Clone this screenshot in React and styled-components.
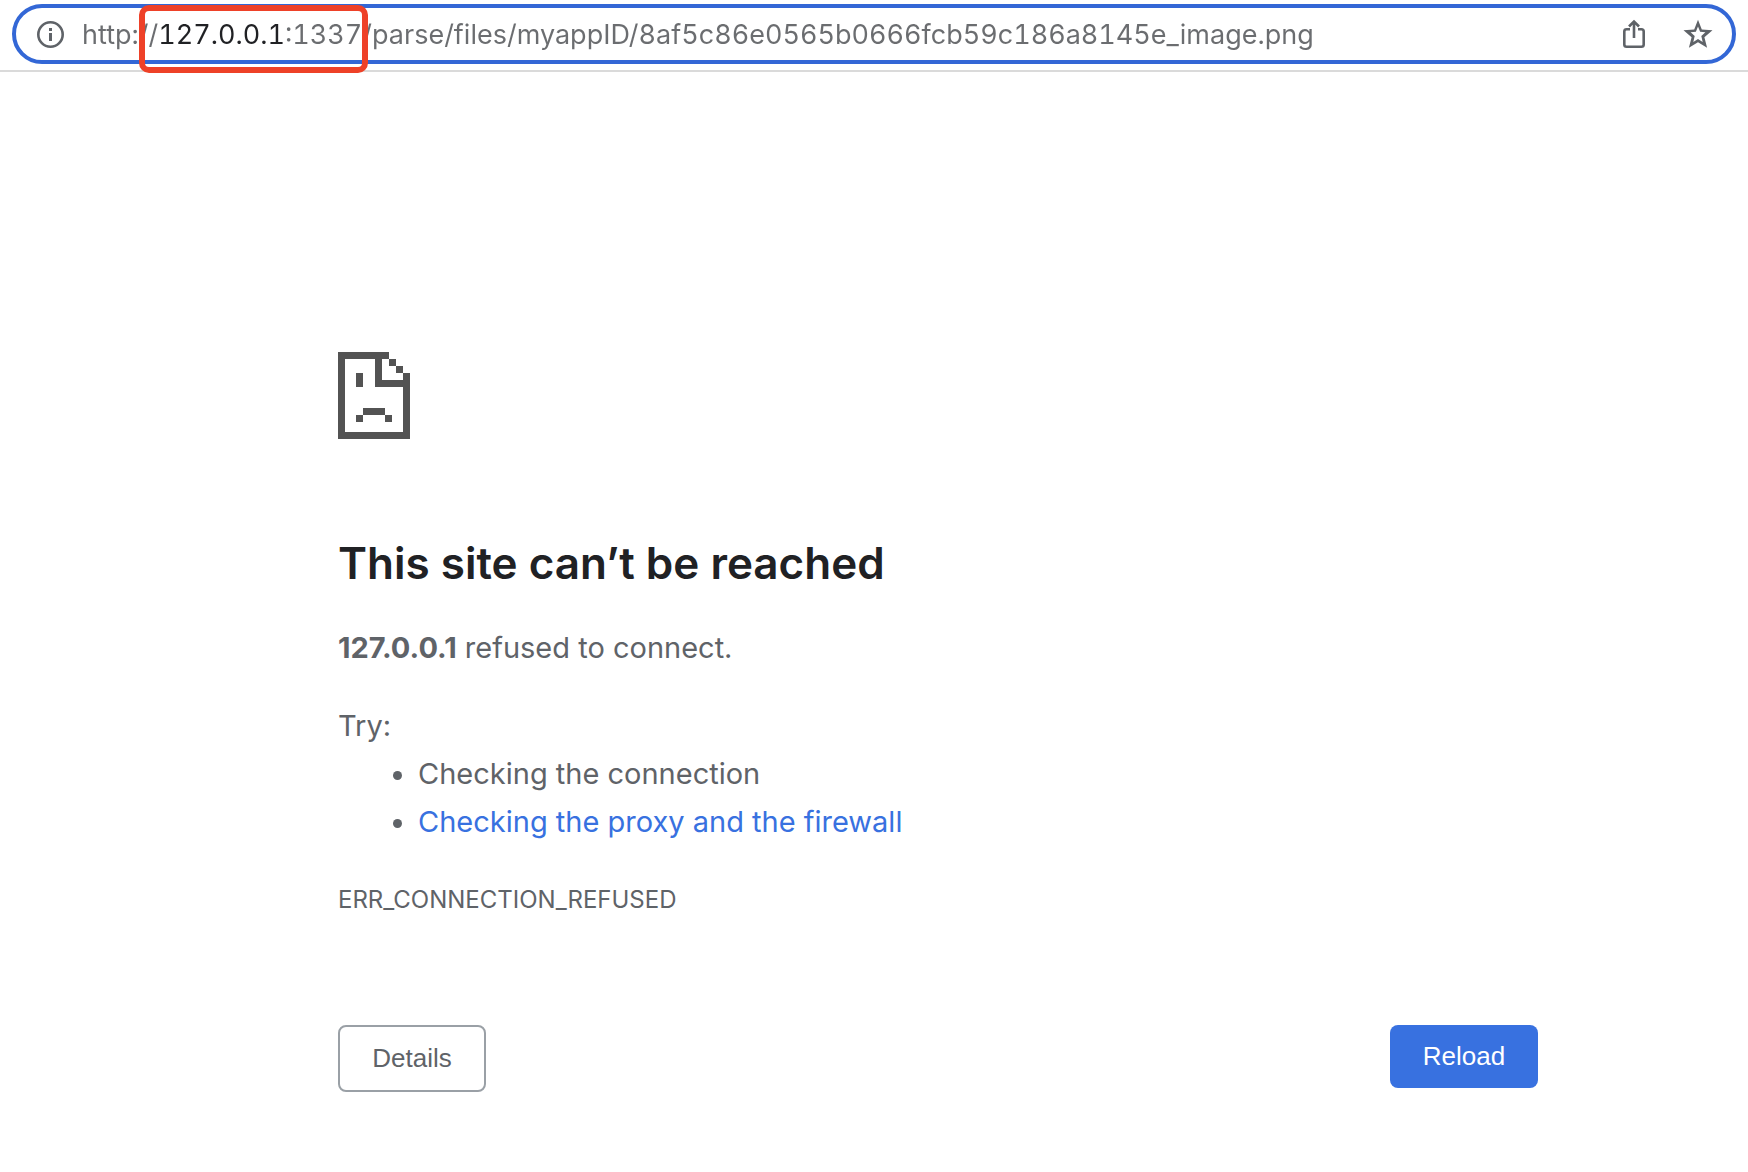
import React from "react";
import styled, { createGlobalStyle } from "styled-components";

const GlobalStyle = createGlobalStyle`
  *, *::before, *::after { box-sizing: border-box; }
  body {
    margin: 0;
    background: #fff;
    color: #5f6368;
    font-family: Inter, "Liberation Sans", sans-serif;
    font-size: 29px;
    line-height: 48px;
  }
`;

const Toolbar = styled.header`
  padding: 4px 12px 6px;
  border-bottom: 2px solid #dadada;
`;

const Omnibox = styled.form`
  position: relative;
  display: flex;
  align-items: center;
  height: 60px;
  padding: 0 19px 0 20px;
  border: 4px solid #3367d6;
  border-radius: 30px;
`;

const IconButton = styled.button`
  display: flex;
  flex: none;
  padding: 0;
  margin-left: ${(p) => p.$gap || 0}px;
  border: 0;
  background: none;
  color: #5f6368;
  cursor: pointer;
`;

/* The gradient paints the host part of the address darker than the rest. */
const Address = styled.input`
  flex: 1;
  min-width: 0;
  height: 50px;
  margin-left: 18px;
  padding: 0;
  border: 0;
  outline: 0;
  font: inherit;
  font-size: 27px;
  font-variant-numeric: tabular-nums;
  color: transparent;
  caret-color: #202124;
  background: linear-gradient(90deg, #6b6d70 76px, #202124 76px, #202124 203px, #6b6d70 203px);
  -webkit-background-clip: text;
  background-clip: text;
`;

const Highlight = styled.span`
  position: absolute;
  top: -3px;
  left: 123px;
  width: 229px;
  height: 68px;
  border: 6px solid #ee4128;
  border-radius: 10px;
  pointer-events: none;
`;

const ErrorPage = styled.main`
  max-width: 1200px;
  margin: 280px 210px 0 338px;
`;

const SadFile = styled.svg`
  display: block;
  width: 72px;
  height: 87px;
  fill: #535353;
`;

const Title = styled.h1`
  margin: 94px 0 31px;
  color: #202124;
  font-size: 44px;
  font-weight: 600;
  line-height: 60px;
`;

const Text = styled.p`
  margin: 0 0 ${(p) => p.$after || 0}px;
`;

const Tips = styled.ul`
  margin: 0 0 30px;
  padding-left: 80px;
`;

const Link = styled.a`
  color: #3871e0;
  text-decoration: none;
`;

const ErrorCode = styled.p`
  margin: 0;
  font-size: 24px;
`;

const Actions = styled.div`
  display: flex;
  align-items: flex-start;
  justify-content: space-between;
  margin-top: 101px;
`;

const Button = styled.button`
  min-width: 148px;
  height: ${(p) => (p.$primary ? 63 : 67)}px;
  padding: 0 32px;
  border: ${(p) => (p.$primary ? "0" : "2px solid #9aa0a6")};
  border-radius: 8px;
  background: ${(p) => (p.$primary ? "#3871e0" : "#fff")};
  color: ${(p) => (p.$primary ? "#fff" : "#5f6368")};
  font-family: "Liberation Sans", Arial, sans-serif;
  font-size: 26px;
  cursor: pointer;
`;

const InfoIcon = () => (
  <svg width="28" height="28" viewBox="0 0 28 28" aria-hidden="true">
    <circle cx="14.5" cy="14.5" r="12.2" fill="none" stroke="currentColor" strokeWidth="2.6" />
    <path d="M13 8h3v3h-3zM13 13h3v8h-3z" fill="currentColor" />
  </svg>
);

const ShareIcon = () => (
  <svg width="24" height="30" viewBox="0 0 24 30" fill="none" stroke="currentColor" strokeWidth="2.6" aria-hidden="true">
    <path d="M8 10.2H4.6Q2.3 10.2 2.3 12.5V25.5Q2.3 27.7 4.6 27.7H19.4Q21.7 27.7 21.7 25.5V12.5Q21.7 10.2 19.4 10.2H16" />
    <path d="M12 19V2.5M7 7.5L12 2.5L17 7.5" />
  </svg>
);

const StarIcon = () => (
  <svg width="30" height="30" viewBox="0 0 30 30" aria-hidden="true">
    <path
      fill="currentColor"
      fillRule="evenodd"
      d="M15 .8L18.8 10.6L29.5 11.3L21.4 18.2L24.1 28.8L15 23.2L5.9 28.8L8.6 18.2L.5 11.3L11.2 10.6ZM15 7.4L12.9 12.8L7.6 13.3L11.7 17L10.3 22.9L15 19.9L19.7 22.9L18.3 17L22.4 13.3L17.1 12.8Z"
    />
  </svg>
);

export default function App() {
  return (
    <>
      <GlobalStyle />
      <Toolbar>
        <Omnibox onSubmit={(e) => e.preventDefault()}>
          <IconButton type="button" aria-label="View site information">
            <InfoIcon />
          </IconButton>
          <Address
            type="text"
            aria-label="Address"
            spellCheck={false}
            defaultValue="http://127.0.0.1:1337/parse/files/myappID/8af5c86e0565b0666fcb59c186a8145e_image.png"
          />
          <IconButton type="button" aria-label="Share this page">
            <ShareIcon />
          </IconButton>
          <IconButton type="button" aria-label="Bookmark this page" $gap={37}>
            <StarIcon />
          </IconButton>
          <Highlight />
        </Omnibox>
      </Toolbar>
      <ErrorPage>
        <SadFile viewBox="0 0 72 87" aria-hidden="true">
          <path d="M0 0H51V7H44V28H65V21H72V87H0ZM7 7V80H65V35H37V7Z" fillRule="evenodd" />
          <path d="M51 7h7v7h-7zM58 14h7v7h-7zM18 21h7v14h-7zM25 56h22v7h-22zM18 63h7v7h-7zM47 63h7v7h-7z" />
        </SadFile>
        <Title>This site can’t be reached</Title>
        <Text $after={30}>
          <strong>127.0.0.1</strong> refused to connect.
        </Text>
        <Text>Try:</Text>
        <Tips>
          <li>Checking the connection</li>
          <li>
            <Link href="#proxy">Checking the proxy and the firewall</Link>
          </li>
        </Tips>
        <ErrorCode>ERR_CONNECTION_REFUSED</ErrorCode>
        <Actions>
          <Button type="button">Details</Button>
          <Button type="button" $primary>
            Reload
          </Button>
        </Actions>
      </ErrorPage>
    </>
  );
}
